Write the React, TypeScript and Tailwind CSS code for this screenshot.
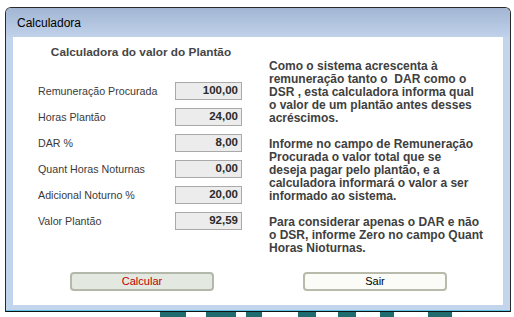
import React from "react";

const rows: [string, string][] = [
  ["Remuneração Procurada", "100,00"],
  ["Horas Plantão", "24,00"],
  ["DAR %", "8,00"],
  ["Quant Horas Noturnas", "0,00"],
  ["Adicional Noturno %", "20,00"],
  ["Valor Plantão", "92,59"],
];

export default function App() {
  return (
    <div
      className="relative w-[514px] h-[317px] overflow-hidden bg-white"
      style={{ fontFamily: '"Liberation Sans", Arial, sans-serif' }}
    >
      <div className="pl-[5px] pt-[7px]">
        <div className="w-[506px] h-[305px] flex flex-col border border-[#2a2a2a] border-b-0 rounded-t-[6px] overflow-hidden">
          {/* title bar */}
          <div className="h-[29px] flex items-center pl-[11px] bg-gradient-to-b from-[#a2b5d3] to-[#c0d2ea] text-[12px] text-black">
            Calculadora
          </div>
          {/* body */}
          <div className="flex-1 flex flex-col bg-[#c2d5ec] px-[7px] pb-[5px]">
            <div className="flex-1 bg-white flex flex-col">
              <div className="flex">
                {/* left column */}
                <div className="w-[256px] flex flex-col">
                  <div className="pt-[9px] h-[45px] text-center text-[11.8px] font-bold text-[#454545] leading-[13px]">
                    Calculadora do valor do Plantão
                  </div>
                  <div className="flex flex-col gap-[8px]">
                    {rows.map(([label, value]) => (
                      <div key={label} className="flex items-center h-[18px]">
                        <div className="w-[162px] pl-[25px] pt-[1px] text-[10.7px] text-[#3a3a3a]">{label}</div>
                        <div className="w-[67px] h-[18px] border border-[#a9a9a9] bg-[#ececec] flex items-center justify-end pr-[3px] text-[11.5px] font-bold text-[#2a2a2a]">
                          {value}
                        </div>
                      </div>
                    ))}
                  </div>
                </div>
                {/* right column */}
                <div className="pt-[23px] text-[12px] font-bold leading-[13px] text-[#404040] whitespace-nowrap">
                  <p>
                    Como o sistema acrescenta à<br />
                    remuneração tanto o&nbsp; DAR como o<br />
                    DSR , esta calculadora informa qual<br />
                    o valor de um plantão antes desses<br />
                    acréscimos.
                  </p>
                  <p className="mt-[13px]">
                    Informe no campo de Remuneração<br />
                    Procurada o valor total que se<br />
                    deseja pagar pelo plantão, e a<br />
                    calculadora informará o valor a ser<br />
                    informado ao sistema.
                  </p>
                  <p className="mt-[13px]">
                    Para considerar apenas o DAR e não<br />
                    o DSR, informe Zero no campo Quant<br />
                    Horas Nioturnas.
                  </p>
                </div>
              </div>
              {/* buttons */}
              <div className="mt-auto mb-[14px] flex">
                <div className="w-[256px] flex justify-center">
                  <button className="ml-[2px] w-[144px] h-[19px] rounded-[4px] border-2 border-[#b4b8aa] bg-[#e3e8e0] text-[11px] text-[#c00000] leading-none">
                    Calcular
                  </button>
                </div>
                <div className="flex-1 flex">
                  <button className="ml-[34px] w-[144px] h-[19px] rounded-[4px] border-2 border-[#b8baac] bg-[#fbfbf8] text-[11px] text-black leading-none">
                    Sair
                  </button>
                </div>
              </div>
            </div>
          </div>
          <div className="h-px bg-[#5cc6e6]" />
          <div className="h-px bg-[#111]" />
        </div>
      </div>
      {/* desktop behind */}
      <div className="flex h-[5px]">
        <div className="ml-[160px] w-[26px] bg-[#1f6b6e]" />
        <div className="ml-[20px] w-[30px] bg-[#1f6b6e]" />
        <div className="ml-[10px] w-[16px] bg-[#1f6b6e]" />
        <div className="ml-[36px] w-[18px] bg-[#1f6b6e]" />
        <div className="ml-[22px] w-[18px] bg-[#1f6b6e]" />
        <div className="ml-[24px] w-[14px] bg-[#1f6b6e]" />
        <div className="ml-[34px] w-[24px] bg-[#1f6b6e]" />
      </div>
    </div>
  );
}
